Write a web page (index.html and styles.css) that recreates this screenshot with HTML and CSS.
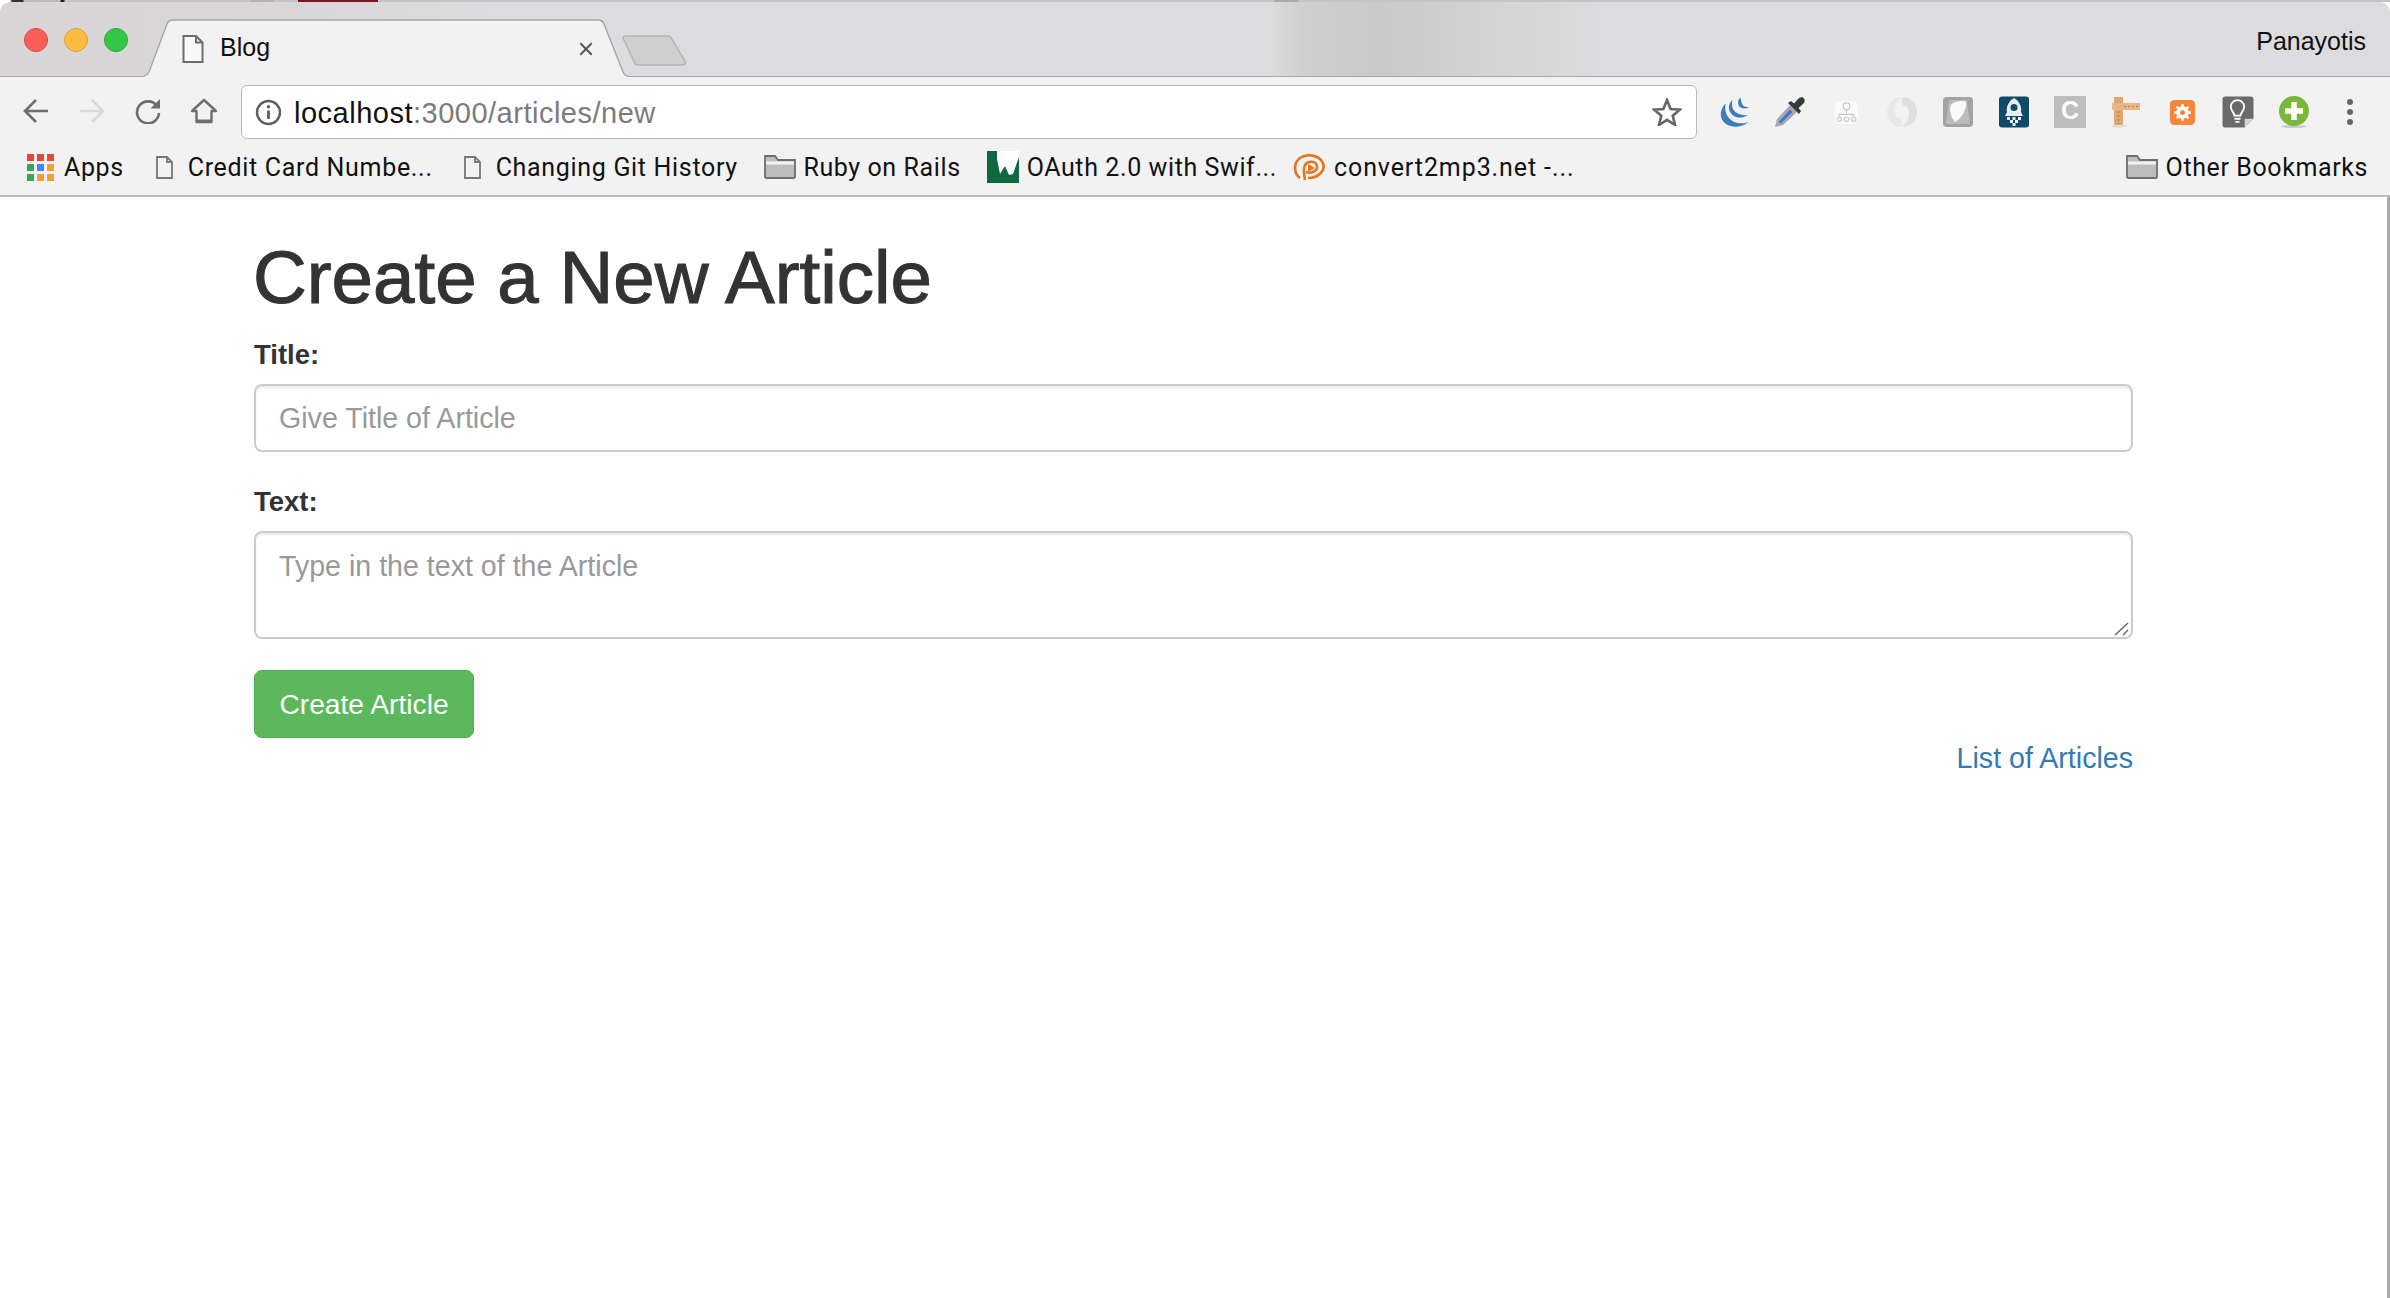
FILE: index.html
```html
<!DOCTYPE html>
<html lang="en">
<head>
<meta charset="utf-8">
<title>Blog</title>
<link rel="stylesheet" href="styles.css">
</head>
<body>
<div class="browser">
  <div class="top-edge"></div>
  <div class="tabstrip">
    <div class="lights"><span class="light red"></span><span class="light yellow"></span><span class="light green"></span></div>
    <div class="tab">
      <svg class="tab-shape" viewBox="0 0 484 58" preserveAspectRatio="none"><path d="M0 58 L1 57 C3 56 4 55 5 53 L23 5 C24 2 26 1 29 1 L454 1 C457 1 459 2 460 5 L479 53 C480 55 482 57 484 57.5 L484 58Z" fill="#f2f2f2"/><path d="M0 57 C3 56 4 55 5 53 L23 5 C24 2 26 1 29 1 L454 1 C457 1 459 2 460 5 L479 53 C480 55 482 57 484 57" fill="none" stroke="#a5a5a7" stroke-width="1.4"/></svg>
      <svg class="tab-doc" viewBox="0 0 22 28"><path d="M1.5 1 H14 L20.5 7.5 V27 H1.5 Z M14 1 V7.5 H20.5" fill="#fff" fill-opacity=".5" stroke="#6c6c6c" stroke-width="2"/></svg>
      <span class="tab-title">Blog</span>
      <svg class="tab-close" viewBox="0 0 14 14"><path d="M2 2 L12 12 M12 2 L2 12" stroke="#555" stroke-width="1.7"/></svg>
    </div>
    <svg class="newtab" viewBox="0 0 64 31"><path d="M1 3 C1 1.500 2 1 3.500 1 L46 1 C48 1 49 2 49.500 3.500 L63 26 C64 28.500 63 30 60 30 L16 30 C14 30 13 29 12.500 27.500 Z" fill="#cfcfd0" stroke="#b4b4b6" stroke-width="1.500"/></svg>
    <span class="profile">Panayotis</span>
  </div>
  <div class="toolbar">
    <div class="nav">
      <svg class="nav-icon" viewBox="0 0 26 26"><path d="M25 13 H3 M13 2 L2 13 L13 24" fill="none" stroke="#6e6e6e" stroke-width="2.600"/></svg>
      <svg class="nav-icon" viewBox="0 0 26 26"><path d="M1 13 H23 M13 2 L24 13 L13 24" fill="none" stroke="#d8d8d8" stroke-width="2.600"/></svg>
      <svg class="nav-icon" viewBox="0 0 26 26"><path d="M22 8 A11 11 0 1 0 24 15" fill="none" stroke="#6e6e6e" stroke-width="2.600"/><path d="M25 1 V10.500 H15.500 Z" fill="#6e6e6e"/></svg>
      <svg class="nav-icon" viewBox="0 0 26 26"><path d="M13 2 L25 13 H20.500 V24 H5.500 V13 H1 Z" fill="none" stroke="#6e6e6e" stroke-width="2.400" stroke-linejoin="round"/><path d="M5 23 H21" stroke="#6e6e6e" stroke-width="3"/></svg>
    </div>
    <div class="omnibox">
      <svg class="info" viewBox="0 0 27 27"><circle cx="13.500" cy="13.500" r="11.500" fill="none" stroke="#5f5f5f" stroke-width="2.400"/><path d="M13.500 11.500 V20" stroke="#5f5f5f" stroke-width="2.800"/><circle cx="13.500" cy="7.700" r="1.700" fill="#5f5f5f"/></svg>
      <span class="url"><span class="host">localhost</span>:3000/articles/new</span>
      <svg class="star" viewBox="0 0 30 28"><path d="M15 2 L18.600 11 L28 11.600 L20.700 17.800 L23.100 27 L15 21.900 L6.900 27 L9.300 17.800 L2 11.600 L11.400 11 Z" fill="none" stroke="#666" stroke-width="2.600" stroke-linejoin="miter"/></svg>
    </div>
    <div class="extensions">
      <span class="ext"><svg viewBox="0 0 33 32"><path d="M8 7 C1 14 1 24 9 29 C16 33 26 31 32 26 C25 29 16 28 11 22 C7 17 7 12 8 7Z M15 3 C10 8 10 15 15 19 C20 23 27 22 31 19 C25 20 19 18 16 14 C14 10 14 6 15 3Z M23 1 C20 4 20 9 23 11 C26 13 29 13 32 11 C28 11 26 10 25 8 C24 6 24 3 23 1Z" fill="#3f7cbc"/></svg></span>
      <span class="ext"><svg viewBox="0 0 32 32"><path d="M1 31 L3 23 L16 9 L23 16 L9 29 Z" fill="#a2a9b3"/><path d="M4.500 26 L16 13.500 L18.500 16 L7 27.500 Z" fill="#4a78c8"/><path d="M14 7 L25 18 L27 15 L24.500 12 L30 7 C32 3 29 0 25 2 L20 7.500 L17 5 Z" fill="#37383a"/></svg></span>
      <span class="ext"><svg class="ext-small" viewBox="0 0 26 26"><rect x="1" y="1" width="24" height="24" rx="5" fill="#fbfbfb"/><g fill="none" stroke="#c9c9c9" stroke-width="1.200"><circle cx="13" cy="6.500" r="3.500"/><path d="M13 10 V15 M5.500 18 V15 H20.500 V18"/><circle cx="5.500" cy="20" r="2.300"/><circle cx="13" cy="20" r="2.300"/><circle cx="20.500" cy="20" r="2.300"/></g></svg></span>
      <span class="ext"><svg viewBox="0 0 32 32"><path d="M17 1 C25 1 31 8 31 16 C31 24 25 31 16 31 C21 27 24 21 23 15 C22.500 11 20 9 17 9.500 C15 6 15 3 17 1Z" fill="#dfdfdf"/><path d="M15 31 C7 31 1 24 1 16 C1 8 7 1 16 1 C11 5 8 11 9 17 C9.500 21 12 23 15 22.500 C17 26 17 29 15 31Z" fill="#e8e8e8"/></svg></span>
      <span class="ext"><svg viewBox="0 0 32 32"><rect x="1" y="1" width="30" height="30" rx="4" fill="#a3a3a3"/><path d="M7 4 H25 L28 28 H4Z" fill="#bcbcbc"/><path d="M13 26 C8 20 7 13 9 9 C12 5 21 4 24 6 C25 13 20 22 13 26Z" fill="#fafafa"/></svg></span>
      <span class="ext"><svg viewBox="0 0 32 32"><rect x="1" y="0.500" width="30" height="31" rx="3" fill="#0f4a68"/><path d="M16 2 C21 5 24 10 23 16 L25 20 L20 20 H12 L7 20 L9 16 C8 10 11 5 16 2Z" fill="#e9eef1"/><circle cx="16" cy="11.500" r="3.500" fill="#0f4a68"/><g fill="#e9eef1"><rect x="9" y="21" width="3" height="3"/><rect x="14.500" y="21" width="3" height="3"/><rect x="20" y="21" width="3" height="3"/><rect x="12" y="24" width="3" height="3"/><rect x="17" y="24" width="3" height="3"/><rect x="14.500" y="27" width="3" height="3"/></g></svg></span>
      <span class="ext"><svg viewBox="0 0 32 32"><rect x="0" y="0" width="32" height="32" fill="#bebebe"/><text class="c-glyph" x="16" y="23" text-anchor="middle">C</text></svg></span>
      <span class="ext"><svg viewBox="0 0 30 32"><ellipse cx="8" cy="30" rx="8" ry="1.500" fill="#ddd"/><rect x="3" y="1" width="9" height="28" rx="1" fill="#e0a871"/><rect x="1" y="7" width="28" height="7" rx="1" fill="#e8b684"/><path d="M13 10.500 H28 M7.500 15 V28" stroke="#b97d45" stroke-width="1.200" stroke-dasharray="2 2"/></svg></span>
      <span class="ext"><svg class="ext-small" viewBox="0 0 24 24"><rect width="24" height="24" rx="4" fill="#f5873a"/><circle cx="12" cy="12" r="4.200" fill="none" stroke="#fff" stroke-width="3.600"/><path d="M12 4 V20 M4 12 H20 M6.300 6.300 L17.700 17.700 M17.700 6.300 L6.300 17.700" stroke="#fff" stroke-width="2.400"/><circle cx="12" cy="12" r="2.400" fill="#f5873a"/></svg></span>
      <span class="ext"><svg viewBox="0 0 31 31"><path d="M3 0.500 H28 C29.500 .5 30.500 1.500 30.500 3 V22 L22 30.500 H3 C1.500 30.500 .5 29.500 .5 28 V3 C.5 1.500 1.500 .5 3 .5Z" fill="#6a6a6a"/><path d="M22 30.500 V22 H30.500Z" fill="#d4d4d4"/><path d="M12 19 C12 16 8.500 14.500 8.500 10.500 A6.500 6.500 0 0 1 21.500 10.500 C21.500 14.500 18 16 18 19 Z M12 22 H18 M13 25 H17" fill="none" stroke="#fff" stroke-width="1.800"/></svg></span>
      <span class="ext"><svg viewBox="0 0 30 32"><ellipse cx="15" cy="30.500" rx="13" ry="1.500" fill="#c8c8c8"/><circle cx="15" cy="15" r="15" fill="#79b93a"/><path d="M15 6 V24 M6 15 H24" stroke="#fff" stroke-width="5.500"/></svg></span>
      <span class="ext"><svg viewBox="0 0 8 28" class="ext-dots"><circle cx="4" cy="4" r="3" fill="#666"/><circle cx="4" cy="14" r="3" fill="#666"/><circle cx="4" cy="24" r="3" fill="#666"/></svg></span>
    </div>
  </div>
  <div class="bookmarks">
    <span class="bm bm-apps"><span class="apps-grid"><i class="r"></i><i class="r"></i><i class="r"></i><i class="g"></i><i class="b"></i><i class="o"></i><i class="g"></i><i class="o"></i><i class="o"></i></span>Apps</span>
    <span class="bm bm-credit"><svg class="bm-doc" viewBox="0 0 17 23"><path d="M1 1 H11 L16 6 V22 H1 Z M11 1 V6 H16" fill="none" stroke="#777" stroke-width="1.800"/></svg>Credit Card Numbe...</span>
    <span class="bm bm-git"><svg class="bm-doc" viewBox="0 0 17 23"><path d="M1 1 H11 L16 6 V22 H1 Z M11 1 V6 H16" fill="none" stroke="#777" stroke-width="1.800"/></svg>Changing Git History</span>
    <span class="bm bm-ruby"><svg class="bm-folder" viewBox="0 0 32 24"><path d="M1 22 C1 23 2 23 3 23 H29 C30 23 31 23 31 22 V5 H14 L11 1 H1Z" fill="#bdbdbd" stroke="#6e6e6e" stroke-width="1.800"/><path d="M2 8 H30" stroke="#f2f2f2" stroke-width="3"/></svg>Ruby on Rails</span>
    <span class="bm bm-oauth"><svg class="bm-fav" viewBox="0 0 32 32"><rect width="32" height="32" fill="#0e6a3e"/><path d="M10 0 H32 V6 L26 23 L22 24 L18 15 L13 23 L10 8Z" fill="#fff"/></svg>OAuth 2.0 with Swif...</span>
    <span class="bm bm-convert"><svg class="bm-round" viewBox="0 0 32 27"><path d="M7 24 C1 20 0 9 7 4 C14 -1 26 1 30 9 C33 17 25 24 15 24" fill="none" stroke="#e5761f" stroke-width="2.600"/><path d="M12 26 C11 21 10 15 12 11 C15 6 23 7 24 12 C25 17 18 20 13 18" fill="none" stroke="#e5761f" stroke-width="2.600"/><path d="M15 10 L22 14 L15 18Z" fill="#e5761f"/></svg>convert2mp3.net -...</span>
    <span class="bm bm-other"><svg class="bm-folder" viewBox="0 0 32 24"><path d="M1 22 C1 23 2 23 3 23 H29 C30 23 31 23 31 22 V5 H14 L11 1 H1Z" fill="#bdbdbd" stroke="#6e6e6e" stroke-width="1.800"/><path d="M2 8 H30" stroke="#f2f2f2" stroke-width="3"/></svg>Other Bookmarks</span>
  </div>
  <main class="page">
    <h1 class="heading">Create a New Article</h1>
    <form class="form">
      <div class="group">
        <label class="label" for="title">Title:</label>
        <input class="control" id="title" type="text" placeholder="Give Title of Article">
      </div>
      <div class="group area-wrap">
        <label class="label" for="text">Text:</label>
        <textarea class="control area" id="text" placeholder="Type in the text of the Article"></textarea>
        <svg class="grip" viewBox="0 0 16 16"><path d="M1 15 L14 3 M9 15 L14 10" stroke="#666" stroke-width="1.500"/></svg>
      </div>
      <button class="submit" type="button">Create Article</button>
    </form>
    <div class="links"><a class="link" href="#">List of Articles</a></div>
  </main>
</div>
</body>
</html>
```
FILE: styles.css
```css
* { box-sizing: border-box; }
html, body { margin: 0; height: 100%; }
body { background: #fff; font-family: "Liberation Sans", Arial, sans-serif; overflow: hidden; }
.browser { display: flex; flex-direction: column; height: 1298px; }

.top-edge {
  height: 2px;
  background: linear-gradient(90deg, #fff 0, #fff 10px, #333 12px, #333 23px, #bbb 24px, #bbb 60px, #222 61px, #222 64px, #c4c4c4 65px, #c4c4c4 251px, #b4b4b4 251px, #b4b4b4 274px, #c4c4c4 274px, #c4c4c4 298px, #7a1323 298px, #7a1323 378px, #c4c4c4 378px, #c4c4c4 1274px, #aaa 1274px, #aaa 1298px, #c4c4c4 1298px, #c4c4c4 2390px);
}
.tabstrip {
  position: relative;
  display: flex;
  height: 75px;
  border-bottom: 1px solid #a7a7a9;
  border-top-left-radius: 10px;
  border-top-right-radius: 10px;
  background: linear-gradient(90deg, #d8d5d6 0, #d9d7d8 300px, #dcdcde 500px, #dcdcde 1270px, #d0d0d1 1300px, #c9c9c9 1380px, #d0d0d1 1450px, #dcdcde 1600px, #dcdcde 2390px);
}
.lights { display: flex; gap: 16px; width: 144px; padding: 26px 0 0 24px; }
.light { width: 24px; height: 24px; border-radius: 50%; }
.red { background: #fc5f5a; border: 1px solid #e0443e; }
.yellow { background: #fdbc40; border: 1px solid #dea034; }
.green { background: #33c748; border: 1px solid #27aa35; }

.tab { position: relative; display: flex; align-items: center; width: 484px; height: 58px; margin-top: 17px; padding: 0 0 0 38px; }
.tab-shape { position: absolute; left: 0; top: 0; width: 100%; height: 100%; }
.tab-doc { position: relative; width: 22px; height: 28px; margin-top: 2px; flex: none; }
.tab-title { position: relative; margin-left: 16px; margin-top: -2px; font-size: 25px; color: #111; font-family: "Liberation Sans", sans-serif; }
.tab-close { position: relative; width: 16px; height: 16px; margin-left: auto; margin-right: 34px; margin-top: 2px; flex: none; }
.newtab { width: 64px; height: 31px; margin: 33px 0 0 -6px; flex: none; }
.profile { margin: 25px 24px 0 auto; font-size: 25px; line-height: 28px; color: #111; }

.toolbar { display: flex; height: 62px; padding: 8px 0 0 23px; background: #f2f2f2; }
.nav { display: flex; gap: 30px; padding-top: 13px; }
.nav-icon { width: 26px; height: 26px; }
.omnibox { display: flex; align-items: center; width: 1456px; height: 54px; margin-left: 24px; padding: 0 14px 0 13px; background: #fff; border: 1.5px solid #b9b9b9; border-radius: 6px; }
.info { width: 27px; height: 27px; flex: none; }
.url { margin: 2px 0 0 12px; font-size: 29px; letter-spacing: .5px; color: #7b7b7b; }
.host { color: #111; }
.star { width: 30px; height: 28px; margin-left: auto; flex: none; }
.extensions { display: flex; margin-left: 9px; padding-top: 7px; }
.ext { display: flex; align-items: center; justify-content: center; width: 56px; height: 40px; }
.ext svg { width: 32px; height: 32px; }
.ext .ext-small { width: 25px; height: 25px; }
.c-glyph { font: bold 25px "Liberation Sans", sans-serif; fill: #fff; }
.ext .ext-dots { width: 8px; height: 28px; }

.bookmarks { display: flex; align-items: center; height: 58px; border-bottom: 2px solid #bdbdbd; background: #f2f2f2; font-family: Roboto, "Liberation Sans", sans-serif; font-size: 25px; color: #111; }
.bm { display: flex; align-items: center; white-space: nowrap; letter-spacing: .6px; }
.bm-apps { margin-left: 27px; }
.bm-credit { margin-left: 32px; letter-spacing: .68px; }
.bm-git { margin-left: 31px; letter-spacing: .68px; }
.bm-ruby { margin-left: 26px; }
.bm-oauth { margin-left: 26px; }
.bm-convert { margin-left: 16px; letter-spacing: .9px; }
.bm-other { margin-left: auto; margin-right: 22px; }
.apps-grid { display: grid; grid-template-columns: repeat(3, 7px); grid-auto-rows: 7px; gap: 3px; margin-right: 10px; }
.apps-grid .r { background: #e8453c; }
.apps-grid .g { background: #34a853; }
.apps-grid .b { background: #4285f4; }
.apps-grid .o { background: #f0a030; }
.bm-doc { width: 17px; height: 23px; margin-right: 15px; }
.bm-folder { width: 32px; height: 24px; margin-right: 7.5px; }
.bm-fav { width: 32px; height: 32px; margin-right: 8px; }
.bm-round { width: 32px; height: 27px; margin-right: 9px; }

.page { flex: 1; padding: 42px 254px 0; border-right: 3px solid #aaa; background: #fff; color: #333; font-size: 28.6px; }
.heading { margin: 0 0 18px -1px; font-size: 74.5px; line-height: 78px; font-weight: 400; -webkit-text-stroke: 1.1px #333; }
.group { margin-bottom: 30px; }
.area-wrap { position: relative; margin-bottom: 31px; }
.grip { position: absolute; right: 3px; bottom: 3px; width: 16px; height: 16px; }
.label { display: block; margin-bottom: 10px; font-size: 27.5px; font-weight: 700; line-height: 39px; }
.control { display: block; width: 100%; height: 68px; padding: 0 23px; border: 2px solid #ccc; border-radius: 8px; background: #fff; box-shadow: inset 0 2px 2px rgba(0,0,0,.075); font: 28.6px "Liberation Sans", Arial, sans-serif; color: #555; outline: none; }
.control::placeholder { color: #999; opacity: 1; }
.area { height: 108px; padding-top: 14px; padding-bottom: 12px; line-height: 39px; resize: none; }
.submit { display: block; width: 220px; height: 68px; padding: 0; border: 1px solid #4cae4c; border-radius: 8px; background: #5cb85c; color: #fff; font: 28.2px "Liberation Sans", Arial, sans-serif; }
.links { margin-top: 1px; text-align: right; line-height: 39px; }
.link { color: #337ab7; text-decoration: none; }
```
